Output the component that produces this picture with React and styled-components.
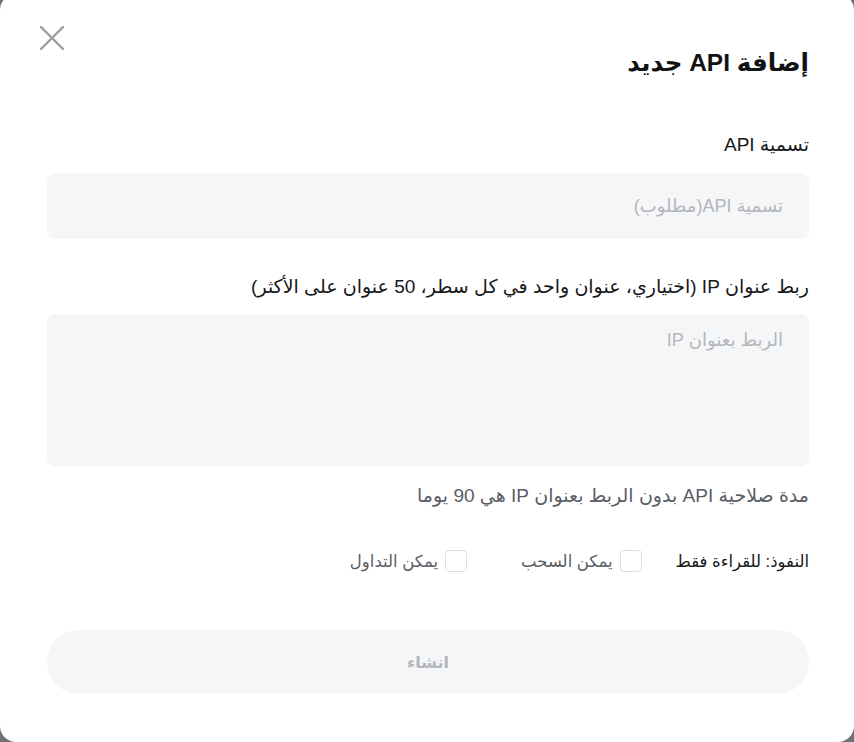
import React from "react";
import styled, { createGlobalStyle } from "styled-components";

const Global = createGlobalStyle`
  html, body { margin: 0; padding: 0; background: #707070; }
  body { font-family: "Liberation Sans", "DejaVu Sans", sans-serif; overflow: hidden; }
  * { box-sizing: border-box; }
`;

const Modal = styled.div`
  position: relative;
  width: 854px;
  height: 748px;
  margin-top: -6px;
  background: #ffffff;
  border-radius: 16px;
  direction: rtl;
  padding: 53px 45px 0 47px;
  display: flex;
  flex-direction: column;
`;

const CloseButton = styled.button`
  position: absolute;
  left: 38px;
  top: 30px;
  width: 28px;
  height: 28px;
  padding: 0;
  border: none;
  background: transparent;
  display: flex;
  align-items: center;
  justify-content: center;
  cursor: pointer;
`;

const Title = styled.h1`
  margin: 0;
  font-size: 24.5px;
  font-weight: 700;
  color: #111214;
  line-height: 32px;
`;

const Label = styled.div`
  font-size: 19px;
  color: #17181a;
  line-height: 24px;
  margin-top: ${(p) => p.$top}px;
`;

const Field = styled.div`
  margin-top: ${(p) => p.$top}px;
  height: ${(p) => p.$h}px;
  background: #f5f6f8;
  border-radius: 8px;
  padding: ${(p) => p.$pad};
  font-size: 18px;
  color: #b3b6bb;
  line-height: 24px;
  display: flex;
  align-items: ${(p) => (p.$multi ? "flex-start" : "center")};
`;

const Hint = styled.div`
  margin-top: 18px;
  font-size: 19px;
  color: #5a5e66;
  line-height: 24px;
`;

const PermRow = styled.div`
  margin-top: 41px;
  display: flex;
  align-items: center;
  font-size: 16.5px;
  line-height: 24px;
`;

const PermTitle = styled.span`
  color: #17181a;
  margin-left: 34px;
`;

const Option = styled.label`
  display: flex;
  align-items: center;
  gap: 7px;
  color: #5a5e66;
  margin-left: 54px;
`;

const Box = styled.span`
  width: 22px;
  height: 22px;
  border: 1px solid #dcdee2;
  border-radius: 4px;
  background: #fff;
  display: inline-block;
`;

const Submit = styled.button`
  margin-top: 57px;
  height: 64px;
  border: none;
  border-radius: 32px;
  background: #f5f6f8;
  color: #b3b6bb;
  font-family: inherit;
  font-size: 16px;
  font-weight: 700;
  direction: rtl;
`;

export default function App() {
  return (
    <>
      <Global />
      <Modal>
        <CloseButton aria-label="close">
          <svg width="26" height="26" viewBox="0 0 26 26">
            <path d="M2 2 L24 24 M24 2 L2 24" stroke="#9b9c9e" strokeWidth="2.4" strokeLinecap="round" />
          </svg>
        </CloseButton>
        <Title>إضافة API جديد</Title>
        <Label $top={54}>تسمية API</Label>
        <Field $top={16} $h={66} $pad="0 26px">تسمية API(مطلوب)</Field>
        <Label $top={36}>ربط عنوان IP (اختياري، عنوان واحد في كل سطر، 50 عنوان على الأكثر)</Label>
        <Field $top={15} $h={152} $pad="14px 26px" $multi>الربط بعنوان IP</Field>
        <Hint>مدة صلاحية API بدون الربط بعنوان IP هي 90 يوما</Hint>
        <PermRow>
          <PermTitle>النفوذ: للقراءة فقط</PermTitle>
          <Option><Box />يمكن السحب</Option>
          <Option><Box />يمكن التداول</Option>
        </PermRow>
        <Submit>انشاء</Submit>
      </Modal>
    </>
  );
}
